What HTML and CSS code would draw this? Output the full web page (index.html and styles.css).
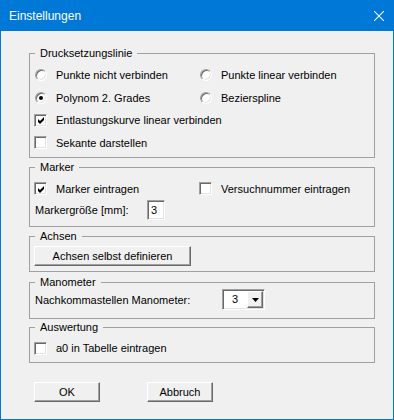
FILE: index.html
```html
<!DOCTYPE html>
<html lang="de">
<head>
<meta charset="utf-8">
<title>Einstellungen</title>
<link rel="stylesheet" href="styles.css">
</head>
<body>
<div class="window">
  <div class="titlebar">
    <span class="title">Einstellungen</span>
    <svg class="close" width="10" height="10" viewBox="0 0 10 10"><path d="M0 0L10 10M10 0L0 10" stroke="#fff" stroke-width="1.1" fill="none"/></svg>
  </div>
  <div class="content">
    <fieldset class="group g1">
      <legend>Drucksetzungslinie</legend>
      <div class="grid rows-g1">
        <label class="opt"><span class="radio"></span>Punkte nicht verbinden</label>
        <label class="opt"><span class="radio"></span>Punkte linear verbinden</label>
        <label class="opt"><span class="radio on"></span>Polynom 2. Grades</label>
        <label class="opt"><span class="radio"></span>Bezierspline</label>
        <label class="opt span2"><span class="check sunken"><svg width="9" height="9" viewBox="0 0 9 9"><polygon points="1,3 3,5 7,1 7,4 3,8 1,6" fill="#000"/></svg></span>Entlastungskurve linear verbinden</label>
        <label class="opt span2"><span class="check sunken"></span>Sekante darstellen</label>
      </div>
    </fieldset>

    <fieldset class="group g2">
      <legend>Marker</legend>
      <div class="grid rows-g2">
        <label class="opt"><span class="check sunken"><svg width="9" height="9" viewBox="0 0 9 9"><polygon points="1,3 3,5 7,1 7,4 3,8 1,6" fill="#000"/></svg></span>Marker eintragen</label>
        <label class="opt"><span class="check sunken"></span>Versuchnummer eintragen</label>
        <div class="field span2"><span class="flabel size-lbl">Markergröße [mm]:</span><span class="num sunken">3</span></div>
      </div>
    </fieldset>

    <fieldset class="group g3">
      <legend>Achsen</legend>
      <button class="btn wide">Achsen selbst definieren</button>
    </fieldset>

    <fieldset class="group g4">
      <legend>Manometer</legend>
      <div class="field"><span class="flabel mano-lbl">Nachkommastellen Manometer:</span>
        <span class="combo sunken"><span class="cval">3</span><span class="cbtn"><svg width="7" height="4" viewBox="0 0 7 4"><polygon points="0,0 7,0 3.5,4" fill="#000"/></svg></span></span>
      </div>
    </fieldset>

    <fieldset class="group g5">
      <legend>Auswertung</legend>
      <label class="opt row22"><span class="check sunken"></span>a0 in Tabelle eintragen</label>
    </fieldset>

    <div class="buttons">
      <button class="btn small">OK</button>
      <button class="btn small">Abbruch</button>
    </div>
  </div>
</div>
</body>
</html>
```
FILE: styles.css
```css
* { box-sizing: border-box; }
html, body { margin: 0; padding: 0; }
body {
  width: 394px;
  height: 420px;
  overflow: hidden;
  font-family: "Liberation Sans", Arial, sans-serif;
  font-size: 11px;
  color: #000;
}
.window {
  width: 394px;
  height: 420px;
  background: #f0f0f0;
  border: 1px solid #0078d7;
  border-top: 0;
  display: flex;
  flex-direction: column;
}
.titlebar {
  height: 31px;
  flex: none;
  background: #0078d7;
  color: #fff;
  display: flex;
  align-items: center;
  justify-content: space-between;
  padding: 0 9px 0 8px;
  font-size: 12px;
}
.title { line-height: 16px; }
.close { display: block; }

.content {
  padding: 16px 18px 0 28px;
  display: flex;
  flex-direction: column;
}
.group {
  margin: 0;
  padding: 0 4px 3px;
  border: 1px solid #a0a0a0;
  min-width: 0;
}
.group legend {
  padding: 0 5px;
  margin-left: 1px;
  height: 13px;
  line-height: 13px;
}
.g1 { padding-top: 4px; padding-bottom: 3px; }
.g2 { margin-top: 3px; padding-top: 4px; padding-bottom: 5px; }
.g3 { margin-top: 3px; padding-top: 3px; padding-bottom: 5px; }
.g4 { margin-top: 4px; padding-top: 0; padding-bottom: 8px; }
.g5 { margin-top: 2px; padding-top: 3px; padding-bottom: 3px; }

.grid {
  display: grid;
  grid-template-columns: 165px auto;
}
.rows-g1 { grid-template-rows: 22px 23px 22px 23px; }
.rows-g2 { grid-template-rows: 21px 22px; }
.span2 { grid-column: 1 / span 2; }

.opt {
  display: flex;
  align-items: center;
  gap: 9px;
  white-space: nowrap;
}
.row22 { height: 22px; }

.sunken {
  background: #fff;
  border: 1px solid;
  border-color: #a0a0a0 #fff #fff #a0a0a0;
  box-shadow: inset 1px 1px 0 #696969, inset -1px -1px 0 #e3e3e3;
}
.check {
  width: 13px;
  height: 13px;
  flex: none;
  display: flex;
  align-items: center;
  justify-content: center;
  padding: 1px 0 0 1px;
}
.check svg { display: block; }
.radio {
  width: 12px;
  height: 12px;
  flex: none;
  margin-left: 1px;
  border-radius: 50%;
  background: #fff;
  border: 1px solid;
  border-color: #a0a0a0 #fff #fff #a0a0a0;
  box-shadow: inset 1px 1px 0 #696969, inset -1px -1px 0 #e3e3e3;
  position: relative;
}
.radio.on::after {
  content: "";
  position: absolute;
  left: 3px;
  top: 3px;
  width: 4px;
  height: 4px;
  border-radius: 50%;
  background: #000;
}

.field {
  display: flex;
  align-items: center;
  height: 21px;
}
.rows-g2 .field { height: 22px; }
.flabel { padding-left: 1px; white-space: nowrap; }
.size-lbl { width: 113px; }
.mano-lbl { width: 188px; }
.num {
  width: 18px;
  height: 20px;
  padding-left: 3px;
  line-height: 18px;
}
.combo {
  width: 43px;
  height: 21px;
  display: flex;
  padding: 1px;
}
.cval {
  flex: 1;
  padding-left: 8px;
  line-height: 17px;
}
.cbtn {
  width: 16px;
  background: #f0f0f0;
  border: 1px solid;
  border-color: #fff #696969 #696969 #fff;
  box-shadow: inset -1px -1px 0 #a0a0a0;
  display: flex;
  align-items: center;
  justify-content: center;
}
.cbtn svg { display: block; }

.btn {
  height: 20px;
  padding: 0;
  margin: 0;
  font: inherit;
  color: #000;
  background: #f0f0f0;
  border: 1px solid;
  border-color: #fff #696969 #696969 #fff;
  box-shadow: inset -1px -1px 0 #a0a0a0;
  border-radius: 0;
}
.wide { width: 157px; display: block; }
.small { width: 66px; }
.buttons {
  display: flex;
  gap: 47px;
  margin-top: 19px;
  padding-left: 5px;
}
```
